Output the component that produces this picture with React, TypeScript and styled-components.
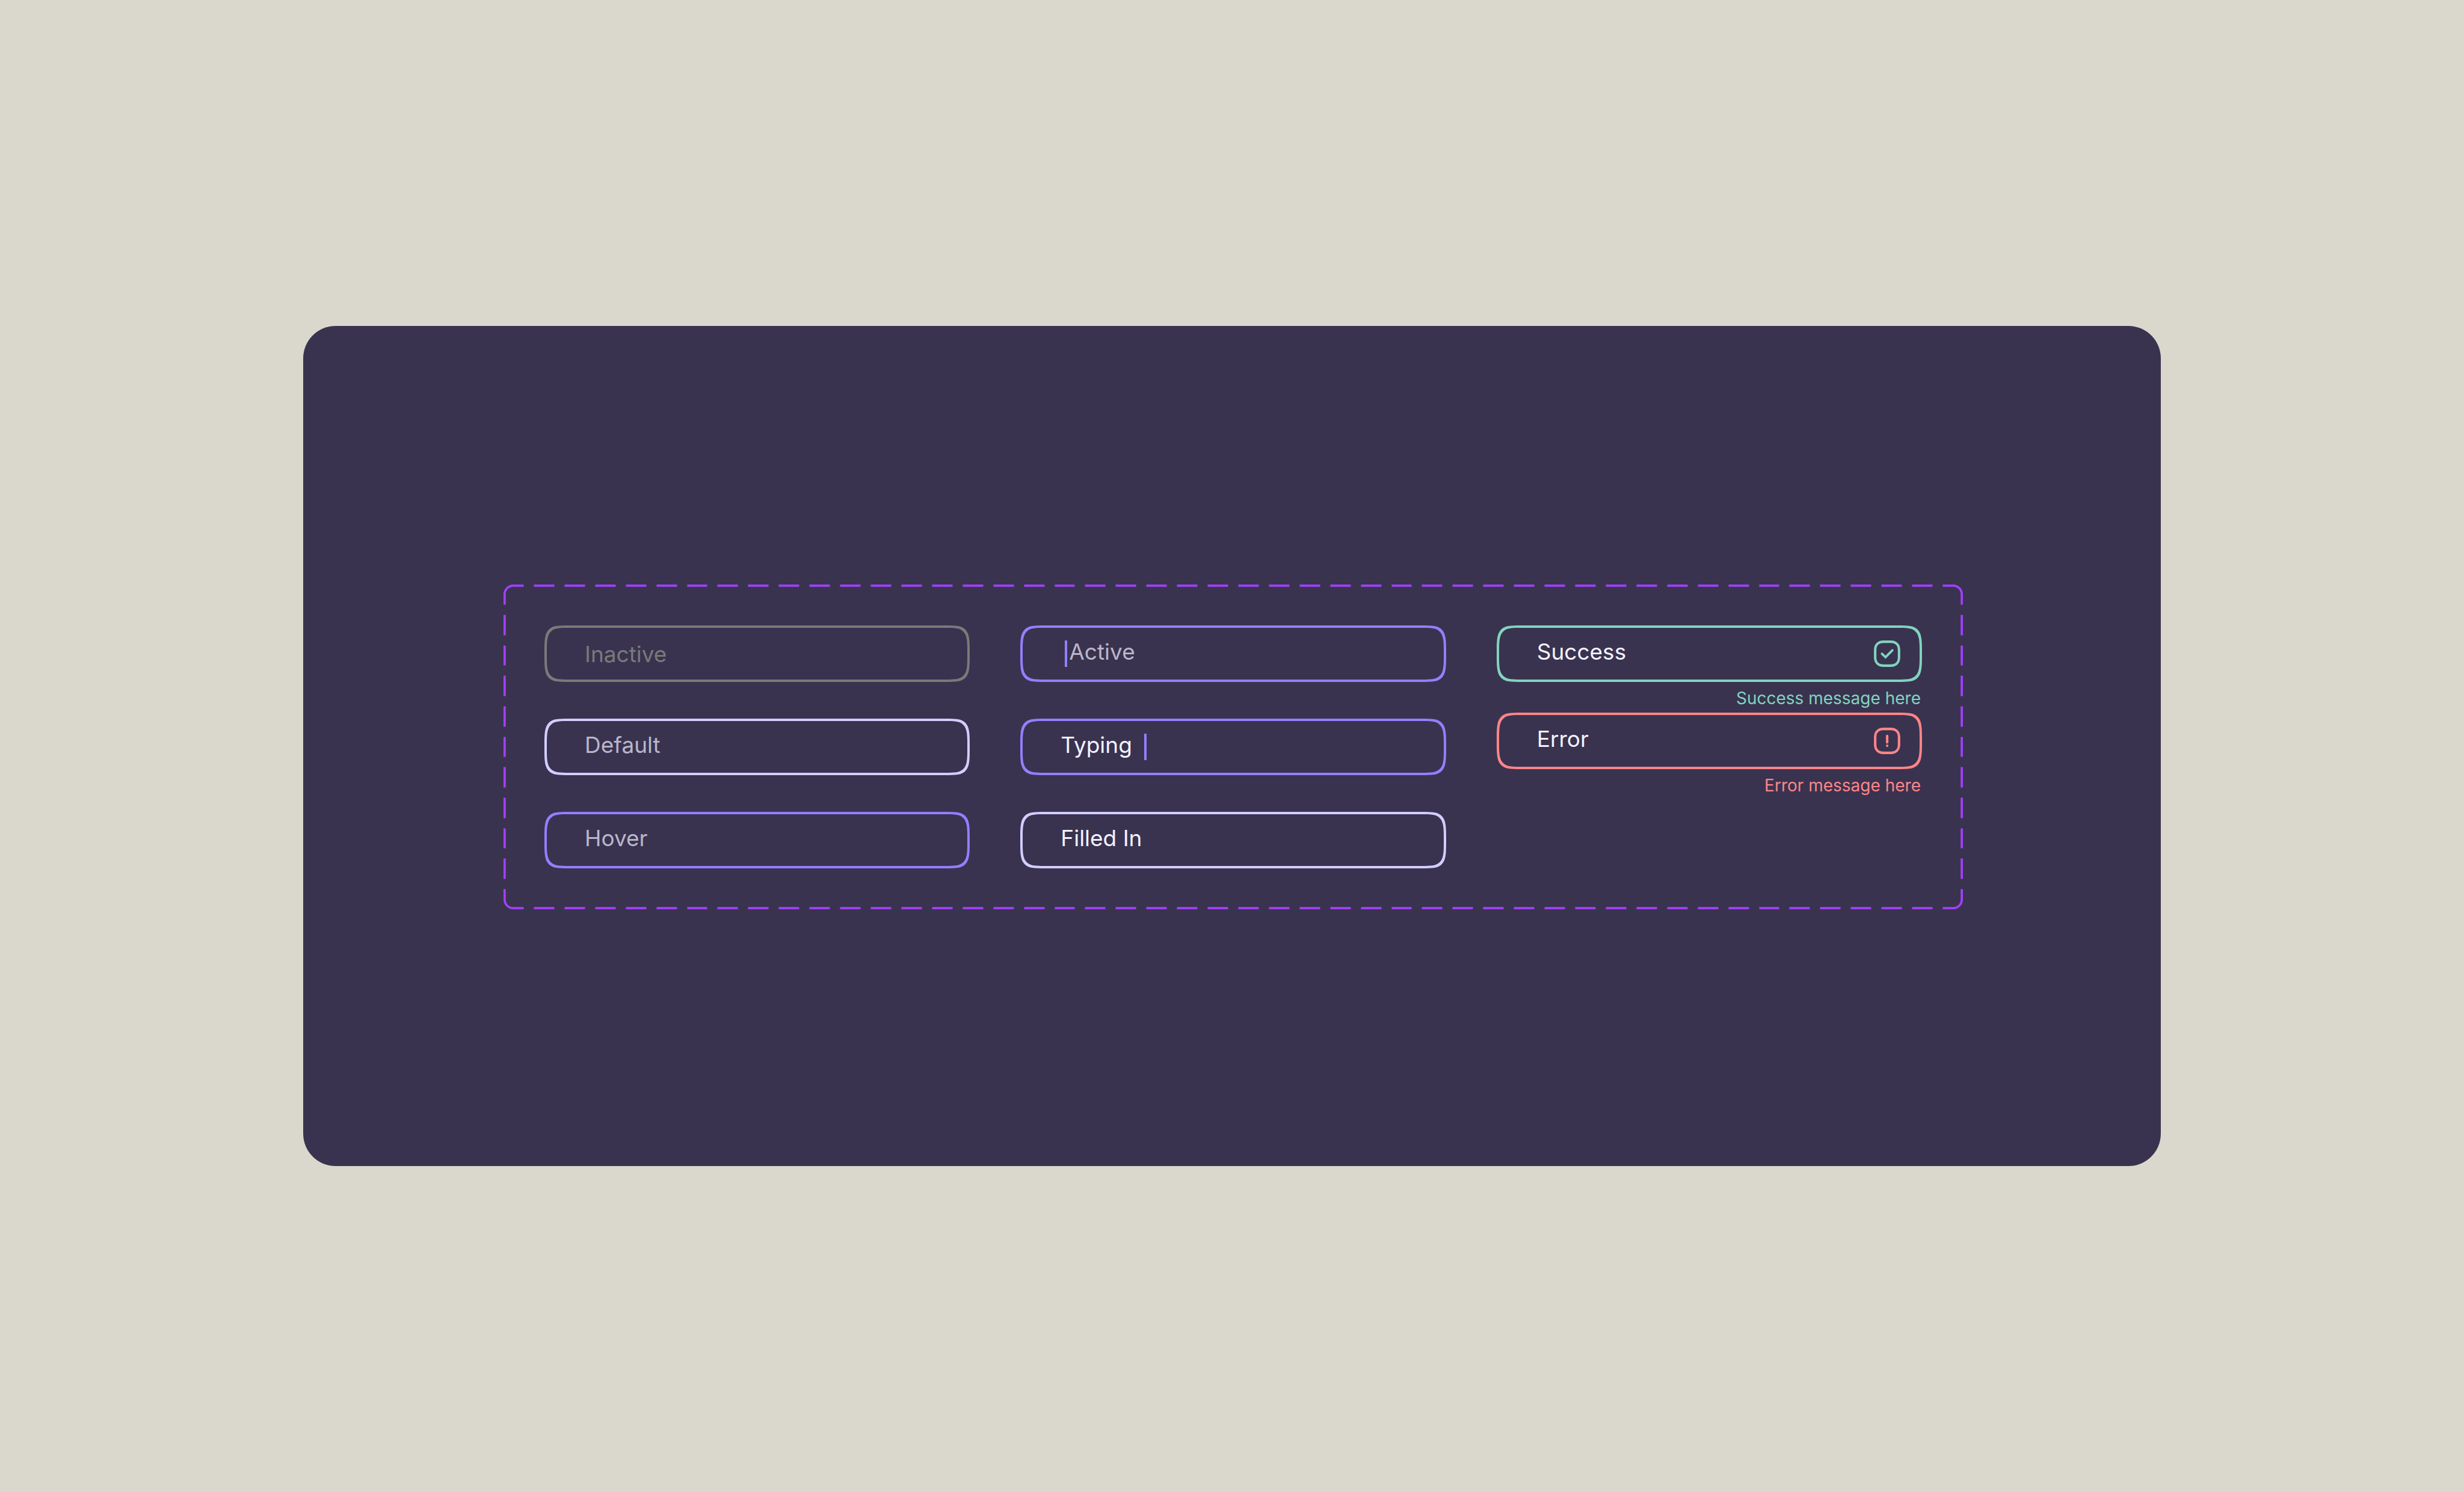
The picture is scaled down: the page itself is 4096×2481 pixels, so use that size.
import React, { useId } from "react";
import styled, { createGlobalStyle, css } from "styled-components";

const color = {
  page: "#dad8cc",
  panel: "#393350",
  frame: "#a33fff",
  disabled: "#7a7a78",
  neutral: "#d3ceff",
  accent: "#957fff",
  success: "#82d4be",
  error: "#ff8588",
  placeholder: "#bbb6ca",
  text: "#f4f2ff",
};

type Tone = "disabled" | "neutral" | "accent" | "success" | "error";

/* One corner, one dash and one corner of the frame; the middle dash repeats along each side. */
const frameTile = `url("data:image/svg+xml,${encodeURIComponent(
  `<svg xmlns="http://www.w3.org/2000/svg" width="400" height="400" viewBox="0 0 400 400">
    <g fill="none" stroke="${color.frame}" stroke-width="11">
      <path d="M5.5 100V48A42.5 42.5 0 0 1 48 5.5H100"/>
      <path d="M300 5.5H352A42.5 42.5 0 0 1 394.5 48V100"/>
      <path d="M394.5 300V352A42.5 42.5 0 0 1 352 394.5H300"/>
      <path d="M100 394.5H48A42.5 42.5 0 0 1 5.5 352V300"/>
      <path d="M150 5.5H250M150 394.5H250M5.5 150V250M394.5 150V250"/>
    </g>
  </svg>`
)}")`;

const GlobalStyle = createGlobalStyle`
  *, *::before, *::after { box-sizing: border-box; }
  body {
    margin: 0;
    background: ${color.page};
    font-family: Inter, "Liberation Sans", sans-serif;
  }
`;

const Page = styled.main`
  min-height: 100vh;
  display: flex;
  align-items: center;
  padding: 0 504px;
`;

const Panel = styled.section`
  flex: 1;
  padding: 430px 329px 427px 333px;
  border-radius: 54px;
  background: ${color.panel};
`;

const Frame = styled.form`
  position: relative;
  display: grid;
  grid-template-columns: repeat(3, minmax(0, 1fr));
  align-items: start;
  column-gap: 84px;
  padding: 68px;

  &::before {
    content: "";
    position: absolute;
    inset: 0;
    border: 42px solid transparent;
    border-image: ${frameTile} 125 / 42px / 0 round;
    pointer-events: none;
  }
`;

const Column = styled.div<{ $gap: number }>`
  display: flex;
  flex-direction: column;
  gap: ${(p) => p.$gap}px;
`;

const Box = styled.div<{ $tone: Tone }>`
  display: flex;
  align-items: center;
  height: 94px;
  padding: 0 32px 0 63px;
  border: 4px solid ${(p) => color[p.$tone]};
  border-radius: 26px;

  @supports (corner-shape: squircle) {
    border-radius: 42px / 47px;
    corner-shape: squircle;
  }
`;

const TextInput = styled.input<{ $hug?: boolean }>`
  flex: 1;
  min-width: 0;
  height: 100%;
  margin: 0;
  padding: 0 0 7px;
  border: 0;
  outline: 0;
  background: transparent;
  color: ${color.text};
  font: inherit;
  font-size: 37px;

  &::placeholder {
    color: ${color.placeholder};
    opacity: 1;
  }

  &:disabled {
    padding: 0;
  }

  &:disabled::placeholder {
    color: ${color.disabled};
  }

  ${(p) =>
    p.$hug &&
    css`
      flex: none;
      field-sizing: content;
    `}
`;

const Caret = styled.span<{ $side: "start" | "end" }>`
  flex: none;
  width: 4px;
  height: 44px;
  margin: ${(p) => (p.$side === "start" ? "0 3px 0 7px" : "0 0 0 20px")};
  background: ${color.accent};
`;

const StatusIcon = styled.svg<{ $tone: Tone }>`
  flex: none;
  width: 44px;
  height: 44px;
  fill: none;
  stroke: ${(p) => color[p.$tone]};
  stroke-width: 18;
`;

const Message = styled.p<{ $tone: Tone }>`
  margin: 4px 0 0;
  padding-right: 2px;
  color: ${(p) => color[p.$tone]};
  font-size: 28px;
  line-height: 47px;
  text-align: right;
`;

const badgeOutline =
  "M70 9.5H123C161 9.5 183.5 32 183.5 70V123C183.5 161 161 183.5 123 183.5H70C32 183.5 9.5 161 9.5 123V70C9.5 32 32 9.5 70 9.5Z";

function SuccessIcon() {
  return (
    <StatusIcon $tone="success" viewBox="0 0 193 193" aria-hidden="true">
      <path d={badgeOutline} />
      <path d="M59 97L85 122L135 72" strokeLinecap="round" strokeWidth="17" />
    </StatusIcon>
  );
}

function ErrorIcon() {
  return (
    <StatusIcon $tone="error" viewBox="0 0 193 193" aria-hidden="true">
      <path d={badgeOutline} />
      <path d="M97 61V107M97 132V132.1" strokeLinecap="round" />
    </StatusIcon>
  );
}

interface FieldProps {
  label: string;
  tone: Tone;
  filled?: boolean;
  disabled?: boolean;
  caret?: "start" | "end";
  icon?: React.ReactNode;
  message?: string;
}

function Field({ label, tone, filled, disabled, caret, icon, message }: FieldProps) {
  const messageId = useId();
  return (
    <div>
      <Box $tone={tone}>
        {caret === "start" && <Caret $side="start" />}
        <TextInput
          type="text"
          aria-label={label}
          aria-describedby={message ? messageId : undefined}
          aria-invalid={tone === "error" || undefined}
          disabled={disabled}
          placeholder={filled ? undefined : label}
          defaultValue={filled ? label : undefined}
          $hug={caret === "end"}
        />
        {caret === "end" && <Caret $side="end" />}
        {icon}
      </Box>
      {message && (
        <Message id={messageId} $tone={tone}>
          {message}
        </Message>
      )}
    </div>
  );
}

export default function App() {
  return (
    <>
      <GlobalStyle />
      <Page>
        <Panel>
          <Frame>
            <Column $gap={61}>
              <Field label="Inactive" tone="disabled" disabled />
              <Field label="Default" tone="neutral" />
              <Field label="Hover" tone="accent" />
            </Column>
            <Column $gap={61}>
              <Field label="Active" tone="accent" caret="start" />
              <Field label="Typing" tone="accent" filled caret="end" />
              <Field label="Filled In" tone="neutral" filled />
            </Column>
            <Column $gap={0}>
              <Field
                label="Success"
                tone="success"
                filled
                icon={<SuccessIcon />}
                message="Success message here"
              />
              <Field
                label="Error"
                tone="error"
                filled
                icon={<ErrorIcon />}
                message="Error message here"
              />
            </Column>
          </Frame>
        </Panel>
      </Page>
    </>
  );
}
